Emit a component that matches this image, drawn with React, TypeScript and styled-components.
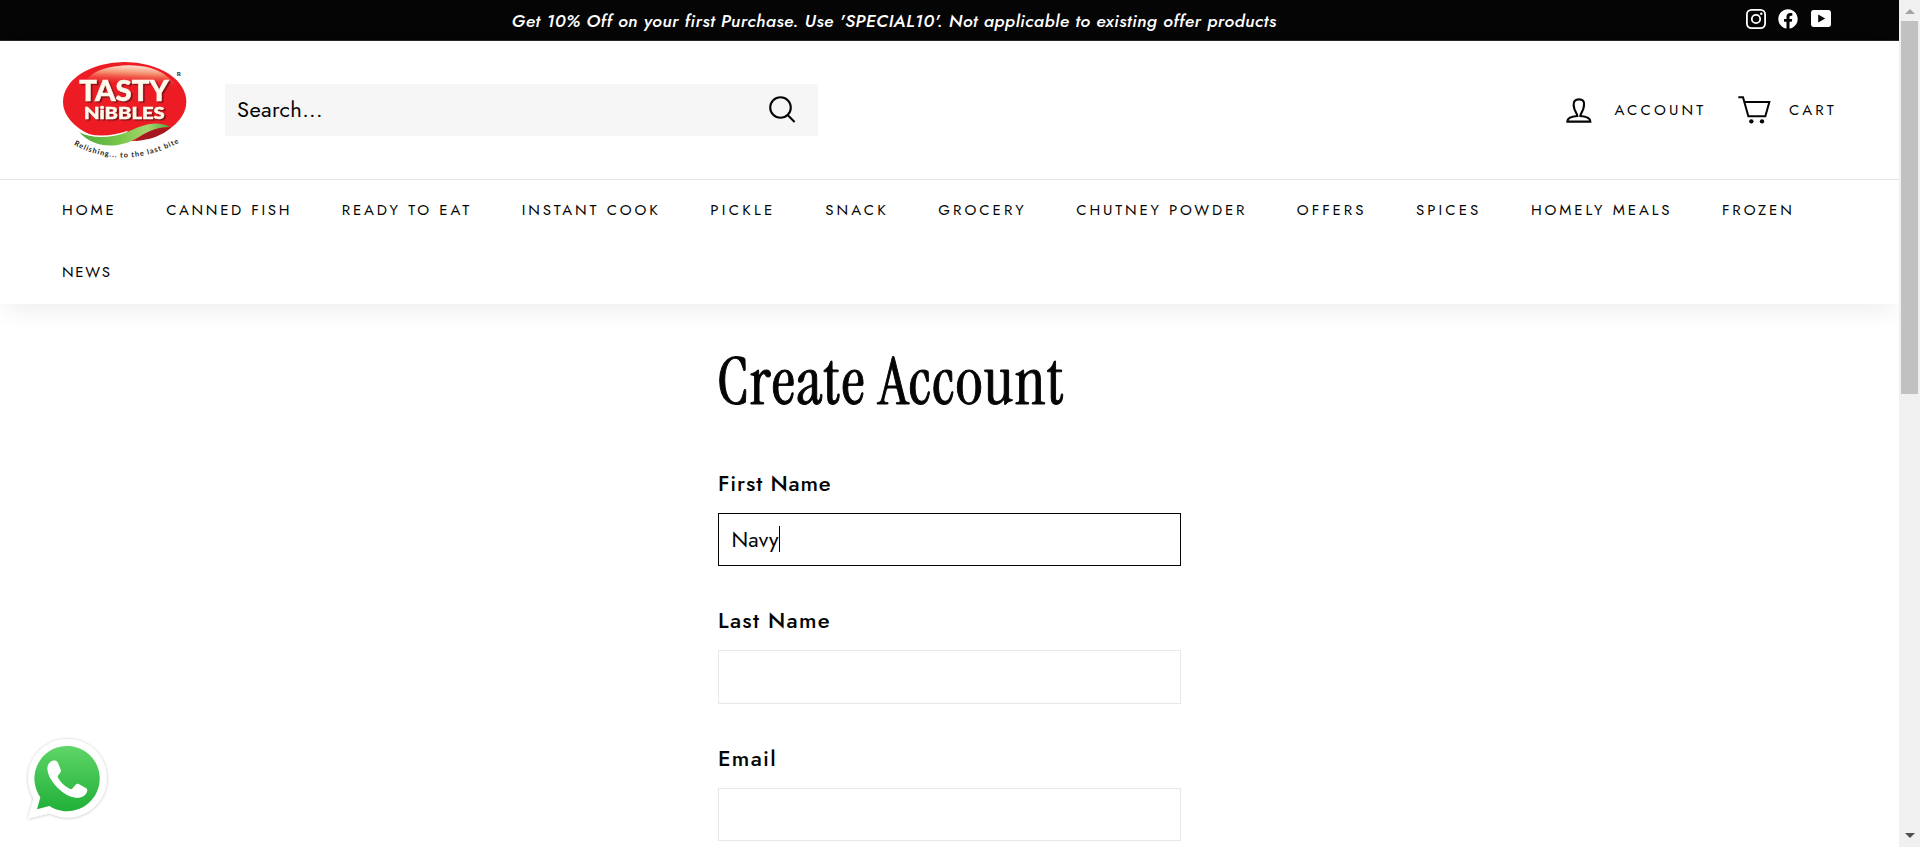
import React from 'react';
import styled, { createGlobalStyle, css } from 'styled-components';
import { FaFacebook } from 'react-icons/fa';

const sans = 'Jost, Lato, sans-serif';
const serif = '"Instrument Serif", "Liberation Serif", serif';

const GlobalStyle = createGlobalStyle`
  * { box-sizing: border-box; }
  body { margin: 0; background: #fff; color: #050505; font-family: ${sans}; overflow: hidden; }
`;

const Window = styled.div`
  display: flex;
  height: 847px;
  overflow: hidden;
`;

const Page = styled.div`
  flex: 1;
  min-width: 0;
  overflow: hidden;
  position: relative;
`;

const AnnouncementBar = styled.div`
  display: flex;
  height: 41px;
  padding: 0 62px;
  background: #050505;
  border-bottom: 1px solid #2b2728;
  color: #fff;
`;

const Announcement = styled.p`
  flex: 1;
  margin: 0;
  text-align: center;
  font-size: 17.8px;
  font-style: italic;
  font-weight: 500;
  line-height: 43px;
  letter-spacing: 0.42px;
  white-space: nowrap;
`;

const SocialLinks = styled.div`
  display: flex;
  gap: 12px;
  width: 111px;
  padding: 9px 0 0 20px;

  svg { display: block; width: 20px; height: 20px; flex: none; }
  svg:last-child { margin-left: 1px; }
`;

const Header = styled.header`
  position: relative;
  background: #fff;
  box-shadow: 0 10px 24px -4px rgba(0, 0, 0, 0.07);
`;

const HeaderMain = styled.div`
  display: flex;
  align-items: center;
  height: 139px;
  padding: 0 62px;
  border-bottom: 1px solid #e5e5e5;
`;

const LogoDrawing = styled.svg`
  width: 126px;
  height: 100px;
  margin-right: 37px;
  flex: none;
`;

const LogoWords = styled.g`
  font-family: Lato, sans-serif;
  font-weight: 900;
  fill: #fff8ec;
  stroke: #fff8ec;
  stroke-width: 1.5px;
  filter: drop-shadow(5px 4px 0 #7d1518);
`;

const SearchBox = styled.div`
  display: flex;
  align-items: center;
  justify-content: space-between;
  width: 593px;
  height: 52px;
  padding: 0 22px 0 12px;
  background: #f6f6f6;
  font-size: 22px;
  letter-spacing: 0.32px;

  span { padding-bottom: 2px; }
  svg { width: 28px; height: 28px; }
`;

const HeaderTools = styled.div`
  display: flex;
  align-items: center;
  margin-left: auto;
`;

const Tool = styled.div<{ $iconWidth: number; $gap: number }>`
  display: flex;
  align-items: center;
  gap: ${p => p.$gap}px;
  font-size: 15px;
  letter-spacing: 3.15px;

  svg { width: ${p => p.$iconWidth}px; height: 28px; flex: none; }
  & + & { margin-left: 32px; }
`;

const Nav = styled.nav`
  display: flex;
  flex-wrap: wrap;
  padding: 0 50px 0 62px;
  column-gap: 49.55px;
  height: 124px;
`;

const NavItem = styled.a<{ $tracking: number }>`
  height: 62px;
  line-height: 60px;
  font-size: 15px;
  font-weight: 380;
  letter-spacing: ${p => p.$tracking}px;
  white-space: nowrap;
`;

const Main = styled.main`
  width: 463px;
  margin: 0 auto;
  padding-top: 38px;
`;

const Title = styled.h1`
  margin: 0 0 45.7px -1px;
  font-family: ${serif};
  font-size: 65.5px;
  font-weight: 400;
  line-height: 80px;
  letter-spacing: 1.25px;
  white-space: nowrap;
  -webkit-text-stroke: 0.9px #050505;
`;

const FieldGroup = styled.div`
  margin-bottom: 39.1px;
`;

const Label = styled.div<{ $tracking: number }>`
  height: 30px;
  margin-bottom: 15px;
  font-size: 22px;
  font-weight: 500;
  line-height: 30px;
  letter-spacing: ${p => p.$tracking}px;
`;

const Field = styled.div<{ $focused?: boolean }>`
  display: flex;
  align-items: center;
  height: 53.5px;
  padding: 0 12.5px;
  border: 1px solid #e8e8e4;
  font-size: 21.5px;
  font-weight: 400;
  letter-spacing: 0.2px;
  ${p => p.$focused && css`border-color: #050505;`}
`;

const Caret = styled.span`
  width: 1px;
  height: 26px;
  background: #000;
`;

const ChatButton = styled.a`
  position: absolute;
  left: 10px;
  bottom: 7px;
  width: 120px;
  height: 120px;

  svg { display: block; width: 120px; height: 120px; }
`;

const ScrollTrack = styled.div`
  display: flex;
  flex-direction: column;
  align-items: center;
  width: 21px;
  padding: 9px 0;
  background: #f0f0f0;
`;

const ScrollThumb = styled.div`
  width: 17px;
  height: 373px;
  margin: 7px 0 auto;
  background: #c1c1c1;
`;

const Arrow = styled.svg`
  width: 10px;
  height: 5px;
  flex: none;
`;

const navItems: [string, number][] = [
  ['HOME', 2.9], ['CANNED FISH', 2.7], ['READY TO EAT', 2.88], ['INSTANT COOK', 2.88],
  ['PICKLE', 3.3], ['SNACK', 3.1], ['GROCERY', 3.04], ['CHUTNEY POWDER', 2.82],
  ['OFFERS', 2.97], ['SPICES', 3.1], ['HOMELY MEALS', 2.88], ['FROZEN', 2.9], ['NEWS', 1.7],
];

function Logo() {
  return (
    <LogoDrawing viewBox="66 60 378 300">
      <defs>
        <linearGradient id="shine" x1="0.62" y1="0" x2="0.5" y2="0.8">
          <stop offset="0" stopColor="#ffe9db" />
          <stop offset="0.4" stopColor="#f48f6c" />
          <stop offset="1" stopColor="#ed1c24" stopOpacity="0" />
        </linearGradient>
        <linearGradient id="leaf" x1="0" x2="1">
          <stop offset="0" stopColor="#4fa83d" />
          <stop offset="0.45" stopColor="#79c74a" />
          <stop offset="0.75" stopColor="#a5d66f" />
          <stop offset="1" stopColor="#4aa53c" />
        </linearGradient>
        <path id="tagline" d="M101 314Q250 394 417 308" />
      </defs>
      <ellipse cx="254" cy="185" rx="185" ry="119" fill="#ed1c24" />
      <path d="M140 118C180 66 330 60 382 110C408 130 420 146 420 155C350 124 230 142 140 118Z" fill="url(#shine)" />
      <path d="M286 300C320 276 350 258 394 262C366 288 330 300 286 303Z" fill="#a51820" />
      <path d="M112 270C160 294 212 290 264 272L240 306L150 304Z" fill="#fff" />
      <path d="M118 277C160 299 218 293 264 275C310 255 343 240 391 261C345 260 318 278 286 297C233 326 162 326 118 277Z" fill="url(#leaf)" />
      <LogoWords>
        <text x="118" y="184" fontSize="84" textLength="268" lengthAdjust="spacingAndGlyphs">TASTY</text>
        <text x="132" y="237" fontSize="52" textLength="242" lengthAdjust="spacingAndGlyphs">NiBBLES</text>
      </LogoWords>
      <text fontFamily="Lato, sans-serif" fontWeight="700" fontSize="22" fill="#222">
        <textPath href="#tagline" textLength="330">Relishing... to the last bite</textPath>
      </text>
      <text x="410" y="109" fontFamily="Lato, sans-serif" fontWeight="900" fontSize="19" fill="#333">R</text>
    </LogoDrawing>
  );
}

export default function App() {
  return (
    <>
      <GlobalStyle />
      <Window>
        <Page>
          <AnnouncementBar>
            <Announcement>
              Get 10% Off on your first Purchase. Use 'SPECIAL10'. Not applicable to existing offer products
            </Announcement>
            <SocialLinks>
              <svg viewBox="0 0 20 20" fill="none" stroke="#fff">
                <rect x="0.9" y="0.9" width="18.2" height="18.2" rx="4.6" strokeWidth="1.8" />
                <circle cx="10" cy="10" r="4.2" strokeWidth="1.8" />
                <circle cx="15.3" cy="4.7" r="1.2" fill="#fff" stroke="none" />
              </svg>
              <FaFacebook />
              <svg viewBox="0 0 20 20">
                <path fill="#fff" fillRule="evenodd" d="M2.2 1H17.8Q20 1.2 20 3.4V15.6Q20 17.8 17.8 18H2.2Q0 17.8 0 15.6V3.4Q0 1.2 2.2 1ZM7.2 5.6V13.6L14.2 9.6Z" />
              </svg>
            </SocialLinks>
          </AnnouncementBar>

          <Header>
            <HeaderMain>
              <Logo />
              <SearchBox>
                <span>Search...</span>
                <svg viewBox="0 0 28 28" fill="none" stroke="#050505" strokeWidth="2.1">
                  <circle cx="12.5" cy="11.5" r="10.3" />
                  <path d="M19.6 18.9L26.6 25.9" />
                </svg>
              </SearchBox>
              <HeaderTools>
                <Tool $iconWidth={26} $gap={22}>
                  <svg viewBox="78 289 78 84" fill="none" stroke="#050505" strokeWidth="6.5">
                    <path d="M112 349C112 340 102 335 101 317C100 304 106 299 117 299C128 299 134 304 132 317C131 335 121 340 121 349C140 350 151 354 151 366H82C82 354 93 350 112 349Z" />
                  </svg>
                  <span>ACCOUNT</span>
                </Tool>
                <Tool $iconWidth={32.7} $gap={18}>
                  <svg viewBox="594 287 98 84" fill="none" stroke="#050505" strokeWidth="6">
                    <path d="M595 291H609L625 348H676L688 305H613" />
                    <circle cx="634" cy="363" r="6.5" fill="#050505" stroke="none" />
                    <circle cx="666" cy="363" r="6.5" fill="#050505" stroke="none" />
                  </svg>
                  <span>CART</span>
                </Tool>
              </HeaderTools>
            </HeaderMain>
            <Nav>
              {navItems.map(([name, tracking]) => (
                <NavItem key={name} $tracking={tracking}>{name}</NavItem>
              ))}
            </Nav>
          </Header>

          <Main>
            <Title>Create Account</Title>
            <FieldGroup>
              <Label $tracking={0.85}>First Name</Label>
              <Field $focused><span>Navy</span><Caret /></Field>
            </FieldGroup>
            <FieldGroup>
              <Label $tracking={1.3}>Last Name</Label>
              <Field />
            </FieldGroup>
            <FieldGroup>
              <Label $tracking={1.3}>Email</Label>
              <Field />
            </FieldGroup>
          </Main>

          <ChatButton>
            <svg viewBox="0 0 360 360">
              <defs>
                <linearGradient id="chat" x1="0" y1="0" x2="0" y2="1">
                  <stop offset="0" stopColor="#5fd568" />
                  <stop offset="1" stopColor="#20b038" />
                </linearGradient>
                <filter id="soft" x="-10%" y="-10%" width="120%" height="120%">
                  <feDropShadow dx="0" dy="1" stdDeviation="4" floodOpacity="0.28" />
                </filter>
              </defs>
              <path filter="url(#soft)" fill="#fff" d="M54 296L71 235A118 118 0 1 1 119 280Z" />
              <path fill="url(#chat)" d="M81 268L91 232A98 98 0 1 1 118 258Z" />
              <path fill="#fff" d="M128 122C119 124 112 134 112 147C114 170 130 192 150 210C172 229 192 235 208 233C222 231 231 222 232 211C232 207 230 205 226 203L206 192C202 190 199 191 196 195L188 205C186 208 183 208 179 206C163 198 152 186 144 173C142 170 143 167 146 164L152 156C154 152 152 149 151 146L143 127C140 121 135 121 128 122Z" />
            </svg>
          </ChatButton>
        </Page>

        <ScrollTrack>
          <Arrow viewBox="0 0 10 5"><path d="M0 5L5 0L10 5Z" fill="#a3a3a3" /></Arrow>
          <ScrollThumb />
          <Arrow viewBox="0 0 10 5"><path d="M0 0H10L5 5Z" fill="#505050" /></Arrow>
        </ScrollTrack>
      </Window>
    </>
  );
}
